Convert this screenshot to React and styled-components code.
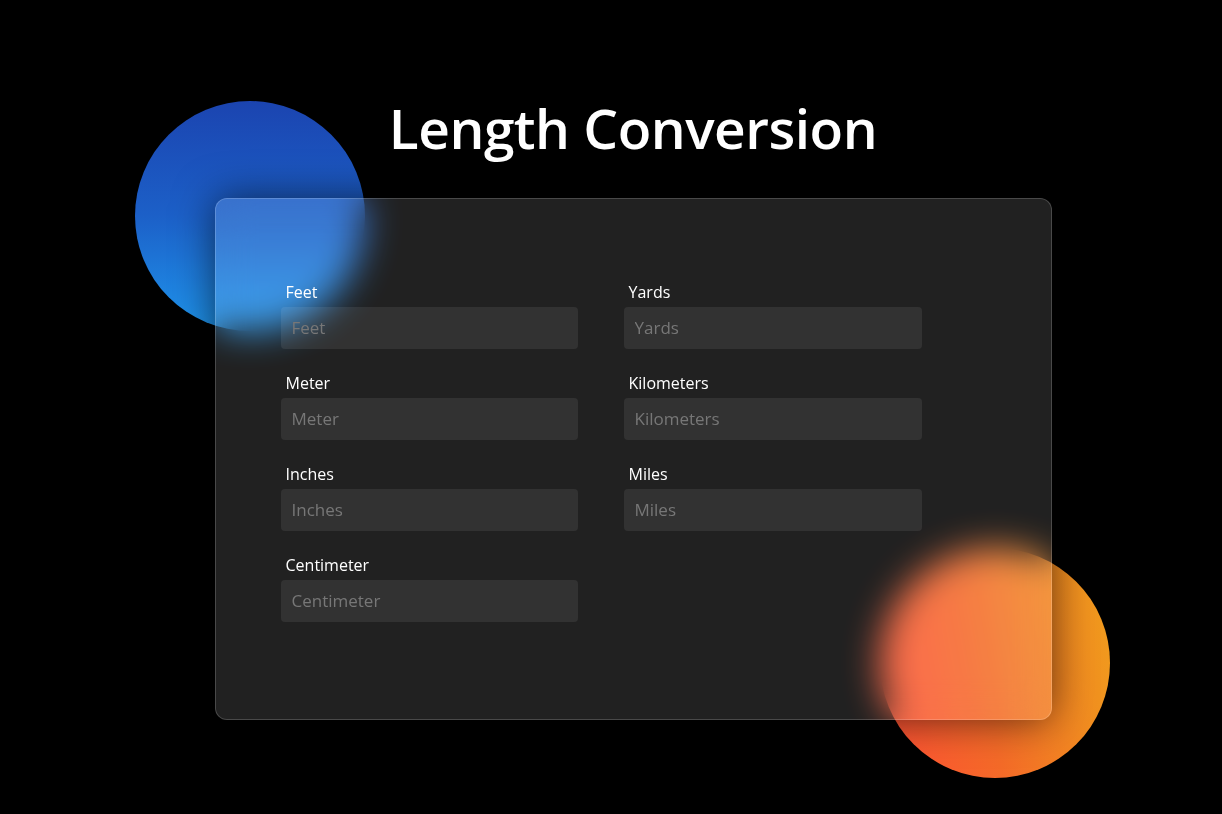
import React from 'react';
import styled, { createGlobalStyle } from 'styled-components';

const GlobalStyle = createGlobalStyle`
  html, body {
    margin: 0;
    padding: 0;
    background: #000;
  }
  body {
    font-family: "Open Sans", "Noto Sans", sans-serif;
    color: #fff;
  }
`;

const Page = styled.div`
  width: 1222px;
  height: 814px;
  overflow: hidden;
  display: flex;
  flex-direction: column;
  align-items: center;
  padding-left: 44px;
  box-sizing: border-box;
`;

const Title = styled.h1`
  margin: 88px 0 0;
  height: 110px;
  font-size: 55px;
  font-weight: 600;
  letter-spacing: -0.5px;
  line-height: 80px;
  color: #fff;
`;

const Stage = styled.div`
  position: relative;
  width: 837px;
  height: 522px;
`;

const Circle = styled.div`
  position: absolute;
  width: 230px;
  height: 230px;
  border-radius: 50%;
  left: ${p => p.$left}px;
  top: ${p => p.$top}px;
  background: ${p => p.$bg};
`;

const Card = styled.div`
  position: relative;
  box-sizing: border-box;
  width: 837px;
  height: 522px;
  border-radius: 12px;
  border: 1.5px solid rgba(255, 255, 255, 0.18);
  background: rgba(255, 255, 255, 0.13);
  backdrop-filter: blur(18px);
  -webkit-backdrop-filter: blur(18px);
  box-shadow: 0 0 40px rgba(0, 0, 0, 0.6);
  padding: 83px 0 0 65px;
`;

const Grid = styled.div`
  display: grid;
  grid-template-columns: 297px 298px;
  column-gap: 46px;
  row-gap: 24px;
`;

const Field = styled.div`
  display: flex;
  flex-direction: column;
`;

const Label = styled.label`
  font-size: 16px;
  line-height: 20px;
  padding-left: 5px;
  margin-bottom: 5px;
  color: #fff;
`;

const Input = styled.input`
  box-sizing: border-box;
  height: 42px;
  border: none;
  outline: none;
  border-radius: 4px;
  background: rgba(255, 255, 255, 0.08);
  padding: 0 11px 2px;
  font-family: inherit;
  font-size: 17px;
  font-weight: 500;
  color: #fff;
  &::placeholder {
    color: #777;
  }
`;

const units = ['Feet', 'Yards', 'Meter', 'Kilometers', 'Inches', 'Miles', 'Centimeter'];

export default function App() {
  return (
    <Page>
      <GlobalStyle />
      <Title>Length Conversion</Title>
      <Stage>
        <Circle
          $left={-80}
          $top={-97}
          $bg="linear-gradient(180deg, #1b44b0 0%, #1c60c8 50%, #1f95ec 100%)"
        />
        <Circle
          $left={665}
          $top={350}
          $bg="linear-gradient(80deg, #ff4f35 0%, #f46a28 45%, #f0a01c 100%)"
        />
        <Card>
          <Grid>
            {units.map(u => (
              <Field key={u}>
                <Label>{u}</Label>
                <Input placeholder={u} />
              </Field>
            ))}
          </Grid>
        </Card>
      </Stage>
    </Page>
  );
}
